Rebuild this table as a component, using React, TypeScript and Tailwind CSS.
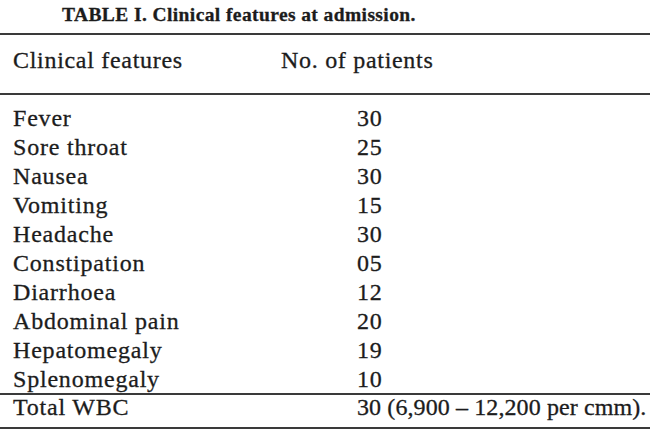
const rows: [string, string][] = [
  ["Fever", "30"],
  ["Sore throat", "25"],
  ["Nausea", "30"],
  ["Vomiting", "15"],
  ["Headache", "30"],
  ["Constipation", "05"],
  ["Diarrhoea", "12"],
  ["Abdominal pain", "20"],
  ["Hepatomegaly", "19"],
  ["Splenomegaly", "10"],
];

const serif = "font-['Liberation_Serif','Times_New_Roman',serif]";
const ink = "[-webkit-text-stroke:0.3px_#1c1c1c]";

export default function App() {
  return (
    <div className={`w-[650px] h-[433px] bg-white text-[#1c1c1c] ${serif} ${ink} overflow-hidden`}>
      {/* caption */}
      <div className="h-[33px] pl-[62px] pt-[2px] text-[19.5px] font-bold leading-[26px] tracking-[0.4px]">
        TABLE I. Clinical features at admission.
      </div>
      <div className="border-t-2 border-[#3a3a3a]" />

      {/* header */}
      <div className="grid grid-cols-[268px_1fr] h-[58px] pt-[11px] pl-[13px] text-[24px] leading-[29px] tracking-[0.7px]">
        <span>Clinical features</span>
        <span>No. of patients</span>
      </div>
      <div className="border-t-2 border-[#3a3a3a]" />

      {/* body */}
      <div className="pt-[9px] -mb-[1px] pl-[13px] text-[24px] tracking-[0.8px] leading-[29px]">
        {rows.map(([name, count]) => (
          <div key={name} className="grid grid-cols-[344px_1fr] h-[29px]">
            <span>{name}</span>
            <span>{count}</span>
          </div>
        ))}
      </div>
      <div className="border-t-2 border-[#3a3a3a]" />
      <div className="grid grid-cols-[344px_1fr] h-[32px] pl-[13px] text-[24px] leading-[24px] tracking-[0.8px]">
        <span>Total WBC</span>
        <span className="tracking-[0.1px]">30 (6,900 – 12,200 per cmm).</span>
      </div>
      <div className="border-t-2 border-[#3a3a3a]" />
    </div>
  );
}
